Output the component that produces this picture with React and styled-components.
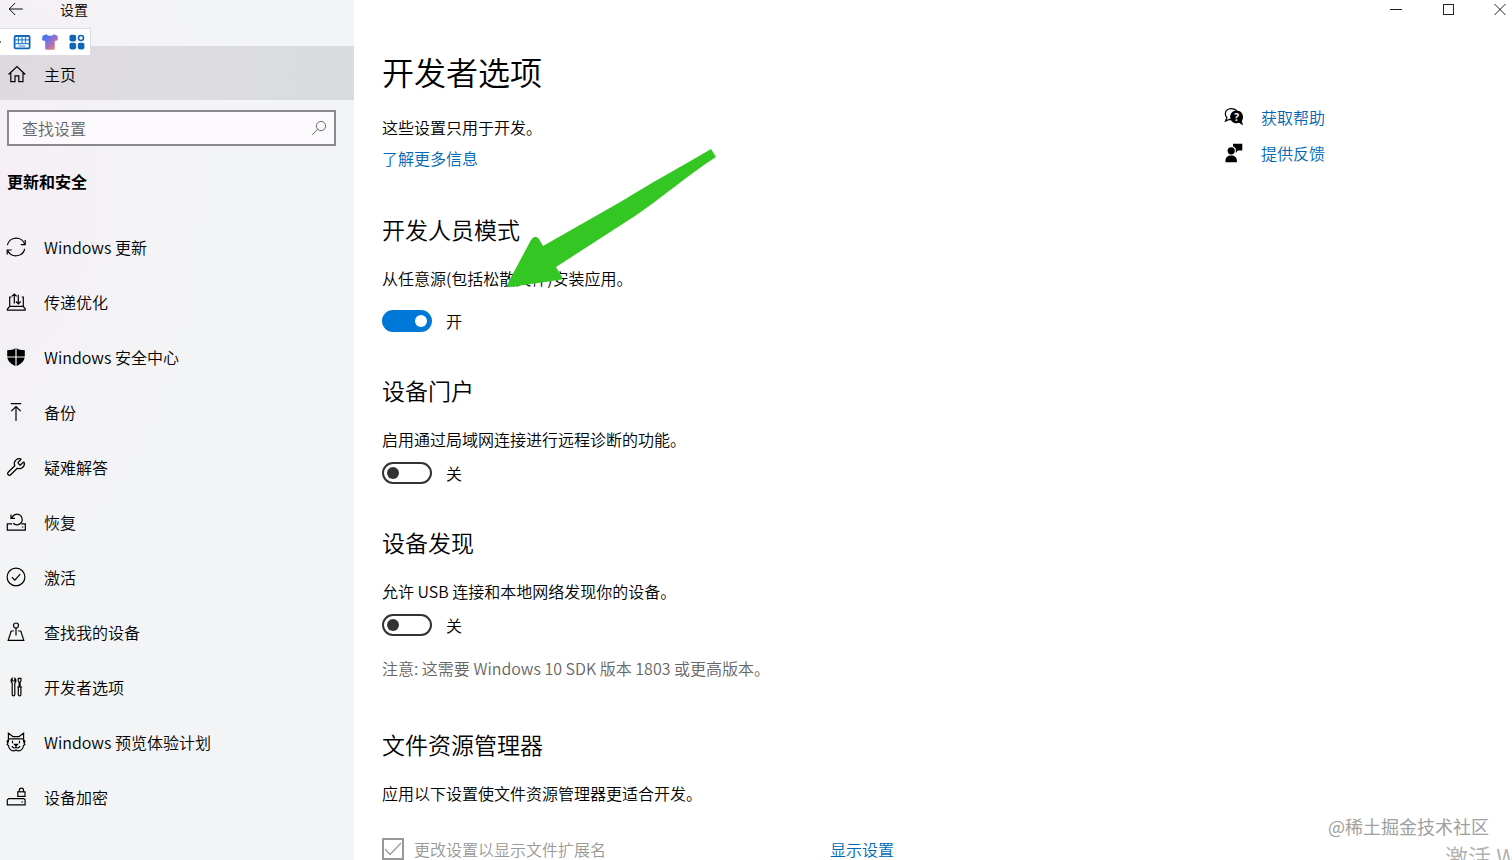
import React from 'react'
import styled, { createGlobalStyle, css } from 'styled-components'
import { Wrench } from 'lucide-react'

const Icon = ({ children, size = 20 }) => (
	<svg
		width={size}
		height={size}
		viewBox="0 0 20 20"
		fill="none"
		stroke="currentColor"
		strokeWidth="1.2"
		aria-hidden
	>
		{children}
	</svg>
)

const navItems = [
	{
		text: 'Windows 更新',
		icon: (
			<Icon>
				<path d="M1.4 8.2A9 9 0 0 1 18.8 7.4M18.7 11.8A9 9 0 0 1 1.6 13.2" />
				<path d="M19.2 3v4.6h-4.4M1.2 17.6V13h4.4" />
			</Icon>
		),
	},
	{
		text: '传递优化',
		icon: (
			<Icon>
				<path d="M5.6 5H3.7v9.3h13.6V5h-1.6M3.7 14.3L1.4 17v1.2h17.8V17l-1.9-2.7" />
				<path d="M8.3 11.5V2M5.8 4.4L8.3 2l2.4 2.4M12.3 2.8v9M9.9 9.5l2.4 2.4 2.4-2.4" />
			</Icon>
		),
	},
	{
		text: 'Windows 安全中心',
		icon: (
			<Icon>
				<path
					fill="currentColor"
					stroke="none"
					d="M10 .8C7.7 2.6 4.8 3.3 1.2 3.3V9c0 5 4 8.2 8.8 10.2 4.8-2 8.8-5.2 8.8-10.2V3.3C15.2 3.3 12.3 2.6 10 .8z"
				/>
				<path stroke="#f3f4f6" d="M10 0v20M0 10h20" />
			</Icon>
		),
	},
	{
		text: '备份',
		icon: (
			<Icon>
				<path d="M4.8 1.6h10.4M10 19V4.5M5.3 9.2L10 4.5l4.7 4.7" />
			</Icon>
		),
	},
	{ text: '疑难解答', icon: <Wrench size={20} strokeWidth={1.5} aria-hidden /> },
	{
		text: '恢复',
		icon: (
			<Icon>
				<path d="M6 11.8H1.3v6.4h18v-6.4h-4" />
				<path d="M7.2 11.3a5.3 5.3 0 1 0-1.3-5.4M5 2.4v4h4M15.8 15h1.5" />
			</Icon>
		),
	},
	{
		text: '激活',
		icon: (
			<Icon>
				<circle cx="10" cy="10" r="8.9" />
				<path d="M5.8 10.2l3 3 5.4-6" />
			</Icon>
		),
	},
	{
		text: '查找我的设备',
		icon: (
			<Icon>
				<circle cx="10" cy="3.5" r="2.5" />
				<path d="M10 6v7.5M7.8 9H5.2L2.2 18.3h15.6L14.8 9h-2.6" />
			</Icon>
		),
	},
	{
		text: '开发者选项',
		icon: (
			<Icon>
				<path d="M6.2 1.3c-1.5 1-1.5 3.7 0 4.7v11.5a1.3 1.3 0 0 0 2.6 0V6c1.5-1 1.5-3.7 0-4.7V4H6.2z" />
				<path d="M12.3 1.3h2.6v2.6l-.8 1.6v4.3h-1V5.5l-.8-1.6zM11.2 10h5M12.3 10v7.5a1.3 1.3 0 0 0 2.6 0V10" />
			</Icon>
		),
	},
	{
		text: 'Windows 预览体验计划',
		icon: (
			<Icon>
				<path d="M2.4 10V1.2L7 4.600h6l4.600-3.400V10M2.400 6.900h15.200" />
				<path d="M2.400 8L1 9.500l1 1.300-.8 1.700 1.300 1C3 16.800 5 18.800 7.500 18.800c1 0 1.800-.3 2.500-.8.700.5 1.500.8 2.500.8 2.500 0 4.500-2 5-5.300l1.300-1-.8-1.700 1-1.300L17.600 8" />
				<path d="M6.500 8.700v2.600M13.500 8.700v2.600M8.500 12.300h3L10 13.800zM10 13.800v1.400M6.200 14c-.2 2 3 2.600 3.800 1.200.8 1.400 4 .8 3.800-1.200" />
			</Icon>
		),
	},
	{
		text: '设备加密',
		icon: (
			<Icon>
				<rect x="11.8" y="4.8" width="7.2" height="4.6" />
				<path d="M13.3 4.8V3.2a2.1 2.1 0 0 1 4.2 0v1.6M2.8 11.6h15l1.3 1.2v5H1.3v-5zM15.5 15h1.5" />
			</Icon>
		),
	},
]

const HomeIcon = () => (
	<Icon>
		<path d="M2.5 10.5L11 2.6l8.3 7.9M4.8 8.6v9H9v-5.8h3.8v5.8H17v-9" />
	</Icon>
)

const BackIcon = () => (
	<Icon size={16}>
		<path d="M1.5 10h17M9 2.5L1.5 10 9 17.5" />
	</Icon>
)

const SearchIcon = () => (
	<Icon size={16}>
		<circle cx="12.5" cy="7.5" r="5.8" />
		<path d="M8.3 11.7L1.5 18.5" />
	</Icon>
)

const KeyboardIcon = () => (
	<svg width="18" height="16" viewBox="0 0 18 16" aria-hidden>
		<rect x="1.6" y="2" width="15" height="12.4" rx="1.2" fill="#fff" stroke="#0f66b8" strokeWidth="1.8" />
		<path d="M2 5.8h14M2 9.6h14M5.5 2v8M9 2v8M12.500 2v8M5.500 12h7" stroke="#2f83cc" strokeWidth="1.2" />
	</svg>
)

const ShirtIcon = () => (
	<svg width="18" height="18" viewBox="0 0 18 18" aria-hidden>
		<defs>
			<linearGradient id="shirt" x1="0" y1="0" x2="1" y2="1">
				<stop offset="0.2" stopColor="#4a74f0" />
				<stop offset="0.55" stopColor="#a06ed0" />
				<stop offset="0.9" stopColor="#f0885c" />
			</linearGradient>
		</defs>
		<path
			fill="url(#shirt)"
			d="M5.5 1.2c1 2.2 6 2.2 7 0l4 1.600.5 4.400-3.200.8v7.500c0 .8-.5 1.200-1.200 1.200H5.400c-.7 0-1.200-.4-1.200-1.200V8L1 7.200l.5-4.400z"
		/>
	</svg>
)

const AppsIcon = () => (
	<svg width="16" height="16" viewBox="0 0 16 16" fill="#0f66b8" aria-hidden>
		<rect x="0.5" y="0.8" width="6.6" height="6.6" rx="1.8" />
		<circle cx="12" cy="4" r="2.5" fill="#fff" stroke="#0f66b8" strokeWidth="1.6" />
		<rect x="0.5" y="8.8" width="6.6" height="6.6" rx="1.8" />
		<rect x="8.8" y="8.8" width="6.6" height="6.6" rx="1.8" />
	</svg>
)

const HelpIcon = () => (
	<svg width="20" height="20" viewBox="0 0 20 20" aria-hidden>
		<path
			d="M7 1.6c-3.3 0-5.7 2.3-5.7 5.2 0 1.5.6 2.8 1.6 3.8L1.5 14l3.7-1.6 2 .2L13 4.5C12 2.7 9.7 1.6 7 1.6z"
			fill="#fff"
			stroke="#000"
			strokeWidth="1.2"
		/>
		<path d="M12.6 3.6c-3.7 0-6.4 2.8-6.4 6.3s2.7 6.3 6.4 6.3c.9 0 1.7-.1 2.5-.4l4 2.6-1.3-4.4c.7-1.1 1.2-2.5 1.2-4.1 0-3.5-2.7-6.3-6.4-6.3z" />
		<text x="12.6" y="13.6" fill="#fff" fontSize="10" fontWeight="700" textAnchor="middle" fontFamily="Open Sans, sans-serif">
			?
		</text>
	</svg>
)

const FeedbackIcon = () => (
	<svg width="20" height="20" viewBox="0 0 20 20" aria-hidden>
		<circle cx="7.2" cy="7.8" r="3.6" />
		<path d="M1.5 19.2v-1.7c0-3 2.2-5 5.7-5s5.7 2 5.7 5v1.7zM9 .8h9.3v6.8h-4.500l-2 2.400V5.800C11.300 4.800 10.300 4 9 3.600z" />
	</svg>
)

const Toggle = ({ id, on }) => (
	<ToggleRow>
		<Switch id={id} type="checkbox" role="switch" defaultChecked={on} />
		<label htmlFor={id}>{on ? '开' : '关'}</label>
	</ToggleRow>
)

const App = () => (
	<Window>
		<GlobalStyle />
		<Sidebar>
			<TitleBar>
				<BackButton type="button" aria-label="返回">
					<BackIcon />
				</BackButton>
				<span>设置</span>
			</TitleBar>
			<HomeLink href="#home">
				<HomeIcon />
				主页
			</HomeLink>
			<SearchBox>
				<input type="search" aria-label="查找设置" placeholder="查找设置" />
				<SearchIcon />
			</SearchBox>
			<SidebarTitle>更新和安全</SidebarTitle>
			<nav>
				{navItems.map((item) => (
					<NavLink href="#page" key={item.text}>
						{item.icon}
						{item.text}
					</NavLink>
				))}
			</nav>
			<InputBar>
				<KeyboardIcon />
				<ShirtIcon />
				<AppsIcon />
			</InputBar>
		</Sidebar>
		<Main>
			<WindowControls>
				<ControlButton type="button" aria-label="最小化">
					<svg width="12" height="12" stroke="#222">
						<path d="M0 6.5h12" />
					</svg>
				</ControlButton>
				<ControlButton type="button" aria-label="最大化">
					<svg width="12" height="12" stroke="#222" fill="none">
						<rect x="1.5" y="1.5" width="10" height="10" />
					</svg>
				</ControlButton>
				<ControlButton type="button" aria-label="关闭">
					<svg width="12" height="12" stroke="#222">
						<path d="M.5 1l11 11M11.5 1l-11 11" />
					</svg>
				</ControlButton>
			</WindowControls>
			<Columns>
				<Content>
					<PageTitle>开发者选项</PageTitle>
					<Text>这些设置只用于开发。</Text>
					<TextLink href="#more">了解更多信息</TextLink>

					<Section $space={43}>
						<SectionTitle>开发人员模式</SectionTitle>
						<Text $gap={19}>从任意源(包括松散文件)安装应用。</Text>
						<Toggle id="dev-mode" on />
						<Arrow width="216" height="144" viewBox="0 0 216 144" aria-hidden>
							<path
								fill="#34c724"
								d="M207 3L212 11C185 28 155 54 131 70L52 121 58 131Q59 134 55 134L6 141Q2 141 4 137L27 94Q31 88 35 93L39 100 118 55C145 38 175 22 207 3z"
							/>
						</Arrow>
					</Section>

					<Section>
						<SectionTitle>设备门户</SectionTitle>
						<Text $gap={10}>启用通过局域网连接进行远程诊断的功能。</Text>
						<Toggle id="portal" />
					</Section>

					<Section>
						<SectionTitle>设备发现</SectionTitle>
						<Text $gap={10}>允许 USB 连接和本地网络发现你的设备。</Text>
						<Toggle id="discovery" />
						<Note>注意: 这需要 Windows 10 SDK 版本 1803 或更高版本。</Note>
					</Section>

					<Section $space={48}>
						<SectionTitle>文件资源管理器</SectionTitle>
						<Text $gap={32}>应用以下设置使文件资源管理器更适合开发。</Text>
						<SettingRow>
							<CheckLabel>
								<CheckMark>
									<input type="checkbox" defaultChecked disabled />
									<svg width="18" height="18" viewBox="0 0 18 18" fill="none" stroke="#999" strokeWidth="1.2">
										<path d="M1 9l5 5.5L17 3" />
									</svg>
								</CheckMark>
								更改设置以显示文件扩展名
							</CheckLabel>
							<TextLink href="#show">显示设置</TextLink>
						</SettingRow>
					</Section>
				</Content>
				<Aside>
					<HelpLink href="#help">
						<HelpIcon />
						获取帮助
					</HelpLink>
					<HelpLink href="#feedback">
						<FeedbackIcon />
						提供反馈
					</HelpLink>
				</Aside>
			</Columns>
		</Main>
		<Watermark>@稀土掘金技术社区</Watermark>
		<Activation>激活 Windows</Activation>
	</Window>
)

export default App

const GlobalStyle = createGlobalStyle`
	* {
		box-sizing: border-box;
	}
	body {
		margin: 0;
		background: #fff;
		color: #000;
		font-family: 'Noto Sans CJK SC', sans-serif;
		font-size: 16px;
		font-weight: 350;
		line-height: 24px;
	}
	button, input {
		font: inherit;
		color: inherit;
	}
	a {
		text-decoration: none;
	}
	svg {
		flex-shrink: 0;
	}
`

const Window = styled.div`
	position: relative;
	display: flex;
	height: 100vh;
	overflow: hidden;
`

const Sidebar = styled.aside`
	position: relative;
	flex: 0 0 354px;
	background: radial-gradient(ellipse at 0 180px, #f5eff5 0, rgba(243, 244, 246, 0) 200px), #f3f4f6;
`

const TitleBar = styled.header`
	display: flex;
	align-items: center;
	gap: 36px;
	height: 46px;
	padding: 0 8px 28px;
	font-size: 14px;
	line-height: 20px;
`

const plainButton = css`
	display: flex;
	align-items: center;
	justify-content: center;
	padding: 0;
	border: 0;
	background: none;
`

const BackButton = styled.button`
	${plainButton}
	width: 16px;
	height: 18px;
`

const rowLink = css`
	display: flex;
	align-items: center;
	gap: 18px;
	padding: 0 6px;
	color: #000;
`

const HomeLink = styled.a`
	${rowLink}
	height: 54px;
	padding-top: 2px;
	background: linear-gradient(100deg, #dfd9df, #dddde0 50%, #d9dbdd);
`

const SearchBox = styled.div`
	display: flex;
	align-items: center;
	height: 36px;
	margin: 10px 18px 0 7px;
	padding: 0 7px 0 13px;
	border: 2px solid #8a8a8c;
	background: #fbf9fb;
	color: #666;
	input {
		flex: 1;
		min-width: 0;
		padding: 0;
		border: 0;
		outline: 0;
		background: none;
	}
	input::placeholder {
		color: #666;
	}
`

const SidebarTitle = styled.h2`
	margin: 23px 7px 26px;
	font-size: 16px;
	font-weight: 700;
	line-height: 24px;
`

const NavLink = styled.a`
	${rowLink}
	height: 55px;
`

const InputBar = styled.div`
	position: absolute;
	top: 28px;
	left: 0;
	display: flex;
	align-items: center;
	gap: 10px;
	height: 28px;
	padding: 0 5px 0 0;
	border: 1px solid #dcdce2;
	border-left: 0;
	background: #fff;
	&::before {
		content: '';
		width: 1px;
		height: 2px;
		margin-right: 2px;
		background: #777;
	}
`

const Main = styled.main`
	flex: 1;
	min-width: 0;
`

const WindowControls = styled.div`
	display: flex;
	justify-content: flex-end;
	gap: 28px;
	height: 18px;
`

const ControlButton = styled.button`
	${plainButton}
	width: 24px;
`

const Columns = styled.div`
	display: flex;
	padding-left: 28px;
`

const Content = styled.div`
	flex: 1;
	padding-top: 33px;
	white-space: nowrap;
`

const PageTitle = styled.h1`
	margin: 0 0 24px;
	font-size: 32px;
	font-weight: 350;
	line-height: 40px;
`

const Text = styled.p`
	margin: 0 0 ${(props) => props.$gap || 7}px;
`

const Note = styled(Text)`
	margin-top: 19px;
	color: #666;
`

const TextLink = styled.a`
	color: #0067b8;
`

const Section = styled.section`
	position: relative;
	margin-top: ${(props) => props.$space || 41}px;
`

const SectionTitle = styled.h2`
	margin: 0 0 21px;
	font-size: 23px;
	font-weight: 350;
	line-height: 32px;
`

const ToggleRow = styled.div`
	display: flex;
	align-items: center;
	gap: 14px;
`

const Switch = styled.input`
	appearance: none;
	display: flex;
	align-items: center;
	width: 50px;
	height: 22px;
	margin: 0;
	padding: 0 3px;
	border: 2px solid #333;
	border-radius: 11px;
	&::before {
		content: '';
		width: 12px;
		height: 12px;
		border-radius: 50%;
		background: #333;
	}
	&:checked {
		justify-content: flex-end;
		border-color: #0078d7;
		background: #0078d7;
	}
	&:checked::before {
		background: #fff;
	}
`

const Arrow = styled.svg`
	position: absolute;
	top: -67px;
	left: 122px;
`

const SettingRow = styled.div`
	display: grid;
	grid-template-columns: 448px auto;
`

const CheckLabel = styled.label`
	display: flex;
	align-items: center;
	gap: 10px;
	color: #999;
`

const CheckMark = styled.span`
	display: grid;
	place-items: center;
	input {
		grid-area: 1 / 1;
		appearance: none;
		width: 22px;
		height: 22px;
		margin: 0;
		border: 2px solid #999;
	}
	svg {
		grid-area: 1 / 1;
	}
`

const Aside = styled.aside`
	flex: 0 0 288px;
	padding-top: 81px;
`

const HelpLink = styled.a`
	display: flex;
	align-items: center;
	gap: 17px;
	height: 36px;
	color: #0067b8;
`

const Watermark = styled.div`
	position: absolute;
	right: 23px;
	bottom: 22px;
	color: #a0a0a0;
	font-size: 18px;
	font-weight: 400;
	text-shadow: 1px 1px 0 #fff;
`

const Activation = styled.div`
	position: absolute;
	top: calc(100% - 20px);
	left: calc(100% - 67px);
	color: #b0b0b0;
	font-size: 23px;
	line-height: 32px;
	white-space: nowrap;
`
